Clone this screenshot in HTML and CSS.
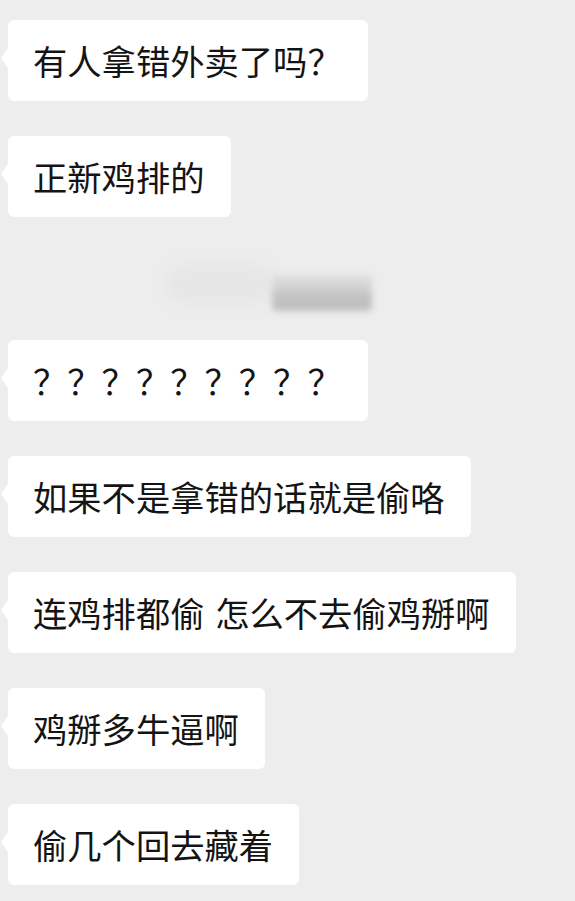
FILE: index.html
```html
<!DOCTYPE html>
<html lang="zh-CN">
	<head>
		<meta charset="utf-8">
		<meta name="viewport" content="width=device-width, initial-scale=1.0">
		<title>聊天记录</title>
		<link rel="stylesheet" href="styles.css">
	</head>
	<body>
		<div class="chat">
			<div class="msg">有人拿错外卖了吗？</div>
			<div class="msg">正新鸡排的</div>
			<!-- 打码的昵称 -->
			<div class="mosaic">
				<span class="blob light"></span>
				<span class="blob dark"></span>
			</div>
			<div class="msg">？？？？？？？？？</div>
			<div class="msg">如果不是拿错的话就是偷咯</div>
			<div class="msg">连鸡排都偷 怎么不去偷鸡掰啊</div>
			<div class="msg">鸡掰多牛逼啊</div>
			<div class="msg">偷几个回去藏着</div>
		</div>
	</body>
</html>
```

FILE: styles.css
```css
*{
	margin: 0;
	padding: 0;
	box-sizing: border-box;
}
body{
	background: #ededed;
	font-family: "Noto Sans CJK SC", "Noto Sans", sans-serif;
	color: #141414;
}
.chat{
	display: flex;
	flex-direction: column;
	align-items: flex-start;
	gap: 35px;
	padding: 20px 0 0 8px;
}
/* 气泡 */
.msg{
	position: relative;
	display: flex;
	align-items: center;
	height: 81px;
	padding: 0 26px 0 25px;
	background: #fff;
	border-radius: 6px;
	font-size: 34.3px;
	line-height: 1;
	word-spacing: 3px;
	white-space: nowrap;
}
.msg::before{
	content: "";
	position: absolute;
	left: -7px;
	top: 28px;
	border-top: 10px solid transparent;
	border-bottom: 10px solid transparent;
	border-right: 7px solid #fff;
}
/* 马赛克 */
.mosaic{
	display: flex;
	align-items: flex-start;
	height: 53px;
	padding: 14px 0 0 160px;
}
.blob{
	display: block;
}
.light{
	width: 104px;
	height: 36px;
	background: #e6e6e6;
	border-radius: 12px;
	filter: blur(7px);
}
.dark{
	width: 100px;
	height: 36px;
	margin-top: 9px;
	background: linear-gradient(#e0e0e0 0%, #d2d2d2 35%, #c2c2c2 60%, #bfbfbf 100%);
	border-radius: 4px;
	filter: blur(3px);
}
```
